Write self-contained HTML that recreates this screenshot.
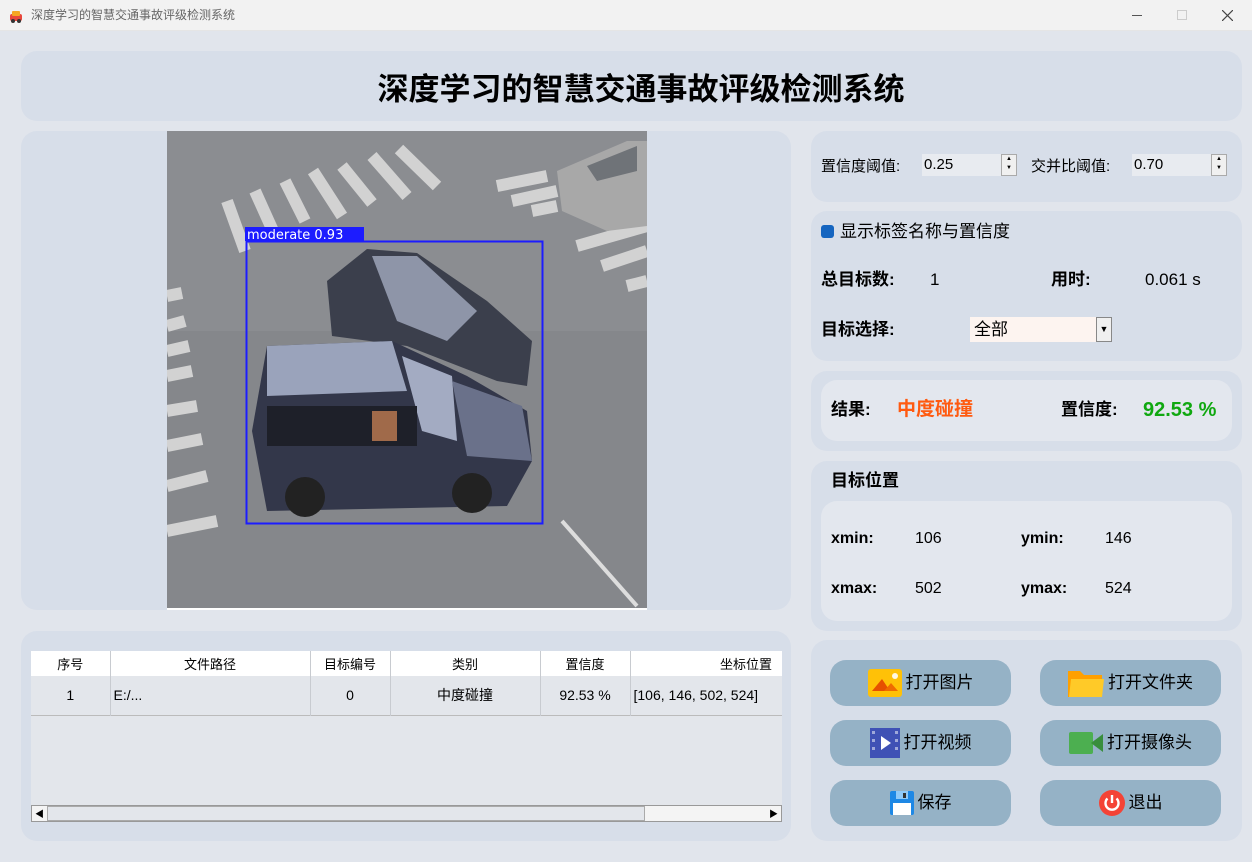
<!DOCTYPE html>
<html><head><meta charset="utf-8"><style>
*{margin:0;padding:0;box-sizing:border-box}
body{width:1252px;height:862px;background:#e1e5ec;font-family:"Liberation Sans","Noto Sans CJK SC",sans-serif;position:relative;overflow:hidden;color:#000}
.abs{position:absolute}
.panel{position:absolute;background:#d7dee9;border-radius:16px}
.inner{position:absolute;background:#e3e7ee;border-radius:16px}
.t{position:absolute;white-space:nowrap;line-height:20px}
.btn{position:absolute;width:181px;height:46px;background:#95b2c6;border-radius:16px;font-size:17px;display:flex;align-items:center;justify-content:center;gap:4px;line-height:20px}
.spin{position:absolute;background:#e8ebf0;height:22px;font-size:15px;padding:0 0 0 2px;line-height:22px}
.sb{position:absolute;right:0;top:0;width:16px;height:22px;background:#f0f0f0;border:1px solid #aaa;font-size:6px;line-height:9px;text-align:center}
th,td{font-weight:normal;border-right:1px solid #c8cbd0}
</style></head><body>
<div class="abs" style="left:0;top:0;width:1252px;height:31px;background:#f2f2f2;border-bottom:1px solid #e5e5e5"></div>
<svg class="abs" style="left:8px;top:8px" width="16" height="16"><rect x="2" y="6" width="12" height="7" rx="2" fill="#e8473b"/><rect x="4" y="3" width="8" height="5" rx="1" fill="#f5a623"/><circle cx="5" cy="13" r="2" fill="#333"/><circle cx="11" cy="13" r="2" fill="#333"/></svg>
<div class="t" style="left:31px;top:5px;font-size:12px;color:#666">深度学习的智慧交通事故评级检测系统</div>
<div class="abs" style="left:1132px;top:15px;width:10px;height:1px;background:#555"></div>
<div class="abs" style="left:1177px;top:10px;width:10px;height:10px;border:1px solid #ccc"></div>
<svg class="abs" style="left:1222px;top:10px" width="11" height="11"><path d="M0 0L11 11M11 0L0 11" stroke="#444" stroke-width="1.2"/></svg>

<div class="panel" style="left:21px;top:51px;width:1221px;height:70px"></div>
<div class="t" style="left:0;width:1282px;text-align:center;top:70px;font-size:31px;line-height:40px;font-weight:bold">深度学习的智慧交通事故评级检测系统</div>

<div class="panel" style="left:21px;top:131px;width:770px;height:479px"></div>
<svg class="abs" style="left:167px;top:131px" width="480" height="479" viewBox="0 0 480 479">
<rect width="480" height="479" fill="#85878b"/>
<rect width="480" height="200" fill="#8b8d91"/>
<g stroke="#d2d2d2" stroke-width="12">
<line x1="60" y1="70" x2="78" y2="120"/><line x1="88" y1="60" x2="106" y2="100"/><line x1="118" y1="50" x2="138" y2="90"/><line x1="146" y1="40" x2="175" y2="85"/><line x1="175" y1="35" x2="205" y2="72"/><line x1="205" y1="25" x2="240" y2="65"/><line x1="232" y1="18" x2="270" y2="55"/>
<line x1="330" y1="55" x2="380" y2="45"/><line x1="345" y1="70" x2="390" y2="60"/><line x1="365" y1="80" x2="390" y2="75"/>
<line x1="410" y1="115" x2="480" y2="95"/><line x1="435" y1="135" x2="480" y2="120"/><line x1="460" y1="155" x2="480" y2="150"/>
<line x1="0" y1="165" x2="15" y2="162"/><line x1="0" y1="195" x2="18" y2="190"/><line x1="0" y1="220" x2="22" y2="215"/><line x1="0" y1="245" x2="25" y2="240"/><line x1="0" y1="280" x2="30" y2="275"/><line x1="0" y1="315" x2="35" y2="308"/><line x1="0" y1="355" x2="40" y2="345"/><line x1="0" y1="400" x2="50" y2="390"/>
</g>
<line x1="395" y1="390" x2="470" y2="475" stroke="#ddd" stroke-width="4"/>
<path d="M390 40 L460 10 L480 10 L480 95 L440 100 L395 80 Z" fill="#a8a8a8"/>
<path d="M420 35 L470 15 L470 40 L430 50 Z" fill="#6f7378"/>
<path d="M160 150 L200 118 L250 122 L320 170 L365 210 L360 255 L330 250 L240 215 L165 205 Z" fill="#3b3f4c"/>
<path d="M205 125 L250 125 L310 180 L280 210 L230 190 Z" fill="#8e95a8"/>
<path d="M100 215 L225 210 L300 245 L360 280 L365 330 L340 375 L100 380 L85 300 Z" fill="#33374a"/>
<path d="M100 215 L225 210 L240 260 L100 265 Z" fill="#9aa3bb"/>
<path d="M235 225 L285 245 L290 310 L255 300 Z" fill="#a3abc2"/>
<path d="M285 250 L355 275 L365 330 L300 325 Z" fill="#6a718a"/>
<rect x="100" y="275" width="150" height="40" fill="#1e2029"/>
<rect x="205" y="280" width="25" height="30" fill="#a06a4a"/>
<circle cx="138" cy="366" r="20" fill="#222"/><circle cx="305" cy="362" r="20" fill="#222"/>
<rect x="0" y="477" width="480" height="2" fill="#fff"/>
<rect x="78" y="96" width="119" height="14" fill="#1c1cff"/>
<text x="80" y="108" fill="#fff" font-family="DejaVu Sans" font-size="13">moderate 0.93</text>
<rect x="79.5" y="110.5" width="296" height="282" fill="none" stroke="#1c1cff" stroke-width="2"/>
</svg>

<div class="panel" style="left:21px;top:631px;width:770px;height:210px"></div>
<div class="abs" style="left:31px;top:651px;width:751px;height:171px;background:#e3e6eb;overflow:hidden">
<table style="border-collapse:collapse;font-size:13px;width:751px;table-layout:fixed">
<tr style="background:#fff;height:25px"><th style="width:79px">序号</th><th style="width:200px">文件路径</th><th style="width:80px">目标编号</th><th style="width:150px">类别</th><th style="width:90px">置信度</th><th style="text-align:right;padding-right:10px;border:none">坐标位置</th></tr>
<tr style="height:39px;border-bottom:1px solid #bbb;font-size:14px"><td style="text-align:center">1</td><td style="padding-left:3px">E:/...</td><td style="text-align:center">0</td><td style="text-align:center">中度碰撞</td><td style="text-align:center">92.53 %</td><td style="border:none;padding-left:3px">[106, 146, 502, 524]</td></tr>
</table>
<div class="abs" style="left:0;top:154px;width:751px;height:17px;background:#f4f4f4;border:1px solid #999"></div>
<div class="abs" style="left:16px;top:155px;width:598px;height:15px;background:#e3e6eb;border:1px solid #aaa"></div>
<div class="t" style="left:4px;top:153px;font-size:9px">◀</div><div class="t" style="left:738px;top:153px;font-size:9px">▶</div>
</div>

<div class="panel" style="left:811px;top:131px;width:431px;height:71px"></div>
<div class="t" style="left:821px;top:157px;font-size:15px">置信度阈值:</div>
<div class="spin" style="left:922px;top:154px;width:95px">0.25<div class="sb">▲<br>▼</div></div>
<div class="t" style="left:1031px;top:157px;font-size:15px">交并比阈值:</div>
<div class="spin" style="left:1132px;top:154px;width:95px">0.70<div class="sb">▲<br>▼</div></div>

<div class="panel" style="left:811px;top:211px;width:431px;height:150px"></div>
<div class="abs" style="left:821px;top:225px;width:13px;height:13px;background:#1565c0;border-radius:3px"></div>
<div class="t" style="left:840px;top:222px;font-size:17px">显示标签名称与置信度</div>
<div class="t" style="left:821px;top:270px;font-size:17px;font-weight:bold">总目标数:</div>
<div class="t" style="left:930px;top:270px;font-size:17px">1</div>
<div class="t" style="left:1051px;top:270px;font-size:17px;font-weight:bold">用时:</div>
<div class="t" style="left:1145px;top:270px;font-size:17px">0.061 s</div>
<div class="t" style="left:821px;top:320px;font-size:17px;font-weight:bold">目标选择:</div>
<div class="abs" style="left:970px;top:317px;width:142px;height:25px;background:#fdf4f0;font-size:17px;padding:0 4px;line-height:25px">全部<div class="abs" style="right:0;top:0;width:16px;height:25px;background:#f0f0f0;border:1px solid #888;font-size:9px;text-align:center;line-height:22px">▼</div></div>

<div class="panel" style="left:811px;top:371px;width:431px;height:80px"></div>
<div class="inner" style="left:821px;top:380px;width:411px;height:61px"></div>
<div class="t" style="left:831px;top:400px;font-size:17px;font-weight:bold">结果:</div>
<div class="t" style="left:897px;top:400px;font-size:19px;font-weight:bold;color:#ff5a10">中度碰撞</div>
<div class="t" style="left:1061px;top:400px;font-size:17px;font-weight:bold">置信度:</div>
<div class="t" style="left:1143px;top:400px;font-size:20px;font-weight:bold;color:#10a810">92.53 %</div>

<div class="panel" style="left:811px;top:461px;width:431px;height:170px"></div>
<div class="t" style="left:831px;top:471px;font-size:17px;font-weight:bold">目标位置</div>
<div class="inner" style="left:821px;top:501px;width:411px;height:120px"></div>
<div class="t" style="left:831px;top:529px;font-size:16px;font-weight:bold">xmin:</div>
<div class="t" style="left:915px;top:529px;font-size:16px">106</div>
<div class="t" style="left:1021px;top:529px;font-size:16px;font-weight:bold">ymin:</div>
<div class="t" style="left:1105px;top:529px;font-size:16px">146</div>
<div class="t" style="left:831px;top:579px;font-size:16px;font-weight:bold">xmax:</div>
<div class="t" style="left:915px;top:579px;font-size:16px">502</div>
<div class="t" style="left:1021px;top:579px;font-size:16px;font-weight:bold">ymax:</div>
<div class="t" style="left:1105px;top:579px;font-size:16px">524</div>

<div class="panel" style="left:811px;top:640px;width:431px;height:201px"></div>
<div class="btn" style="left:830px;top:660px"><svg width="34" height="28"><rect x="0" y="0" width="34" height="28" rx="3" fill="#ffc107"/><path d="M4 22 L14 10 L22 22Z" fill="#e65100"/><path d="M16 22 L23 14 L30 22Z" fill="#ef6c00"/><circle cx="27" cy="7" r="3" fill="#fff8e1"/></svg>打开图片</div>
<div class="btn" style="left:1040px;top:660px"><svg width="36" height="28"><path d="M0 2 h12 l4 4 h18 v22 h-34z" fill="#ffa000"/><path d="M3 10 h33 l-2 18 h-33z" fill="#ffca28"/></svg>打开文件夹</div>
<div class="btn" style="left:830px;top:720px"><svg width="30" height="30"><rect width="30" height="30" fill="#3f51b5"/><g fill="#9fa8da"><rect x="2" y="3" width="3" height="3"/><rect x="2" y="11" width="3" height="3"/><rect x="2" y="19" width="3" height="3"/><rect x="25" y="3" width="3" height="3"/><rect x="25" y="11" width="3" height="3"/><rect x="25" y="19" width="3" height="3"/></g><path d="M11 8 L21 15 L11 22Z" fill="#fff"/></svg>打开视频</div>
<div class="btn" style="left:1040px;top:720px"><svg width="34" height="22"><rect x="0" y="0" width="24" height="22" rx="2" fill="#4caf50"/><path d="M22 11 L34 2 V20Z" fill="#388e3c"/></svg>打开摄像头</div>
<div class="btn" style="left:830px;top:780px"><svg width="24" height="24"><rect width="24" height="24" rx="2" fill="#1e88e5"/><rect x="6" y="0" width="12" height="8" fill="#90caf9"/><rect x="13" y="2" width="3" height="5" fill="#333"/><rect x="3" y="12" width="18" height="12" fill="#fff"/></svg>保存</div>
<div class="btn" style="left:1040px;top:780px"><svg width="26" height="26"><circle cx="13" cy="13" r="13" fill="#f44336"/><path d="M8.5 8.5 A6.5 6.5 0 1 0 17.5 8.5" stroke="#fff" stroke-width="2.4" fill="none"/><line x1="13" y1="5" x2="13" y2="13" stroke="#fff" stroke-width="2.4"/></svg>退出</div>
</body></html>
